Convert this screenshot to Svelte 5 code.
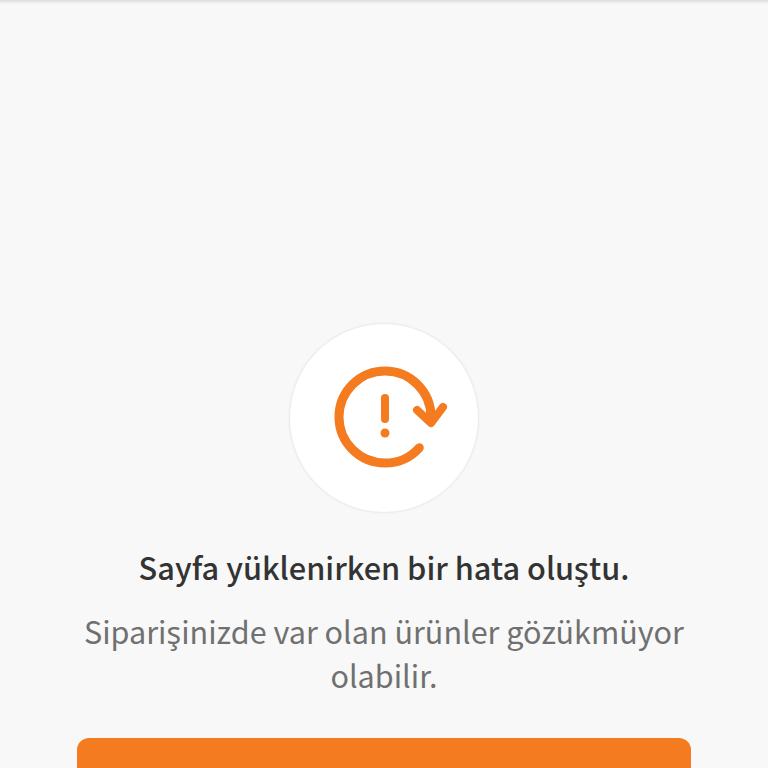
<script lang="ts">
    const title = 'Sayfa yüklenirken bir hata oluştu.';
    const message = 'Siparişinizde var olan ürünler gözükmüyor olabilir.';
</script>

<div class="page">
    <div class="topline"></div>
    <div class="content">
        <div class="badge">
            <svg width="120" height="110" viewBox="0 0 120 110" fill="none" aria-hidden="true">
                <path d="M61 35 L61 56" stroke="#f47b1f" stroke-width="8" stroke-linecap="round" />
                <circle cx="61" cy="70" r="4.5" fill="#f47b1f" />
                <circle cx="61" cy="54" r="46" stroke="#f47b1f" stroke-width="9" stroke-linecap="round" stroke-dasharray="255 34" stroke-dashoffset="-33.5" />
                <path d="M93 47 L107 60 L119 44" stroke="#f47b1f" stroke-width="8" stroke-linecap="round" stroke-linejoin="round" />
            </svg>
        </div>
        <h1>{title}</h1>
        <p>{message}</p>
        <button type="button" aria-label="Tekrar dene"></button>
    </div>
</div>

<style>
    :global(body) {
        margin: 0;
        background: #f8f8f8;
    }
    .page {
        height: 768px;
        overflow: hidden;
        background: #f8f8f8;
        font-family: "Noto Sans CJK KR", "Noto Sans", sans-serif;
    }
    .topline {
        height: 4px;
        background: linear-gradient(#dcdcdc, #f8f8f8);
    }
    .content {
        display: flex;
        flex-direction: column;
        align-items: center;
        padding: 319px 77px 0;
    }
    .badge {
        width: 188px;
        height: 188px;
        border: 1px solid #ececec;
        border-radius: 50%;
        background: #fff;
        display: flex;
        align-items: center;
        justify-content: center;
        box-shadow: 0 0 3px rgba(0, 0, 0, 0.05);
    }
    svg {
        overflow: visible;
    }
    h1 {
        margin: 34px -40px 0;
        font-size: 30.72px;
        line-height: 40px;
        font-weight: 500;
        color: #333;
        text-align: center;
    }
    p {
        margin: 22px -20px 0;
        font-size: 30.55px;
        line-height: 44px;
        font-weight: 400;
        color: #707070;
        text-align: center;
    }
    button {
        width: 614px;
        height: 60px;
        flex: none;
        margin-top: 41px;
        border: none;
        border-radius: 12px;
        background: #f47b1f;
    }
</style>
